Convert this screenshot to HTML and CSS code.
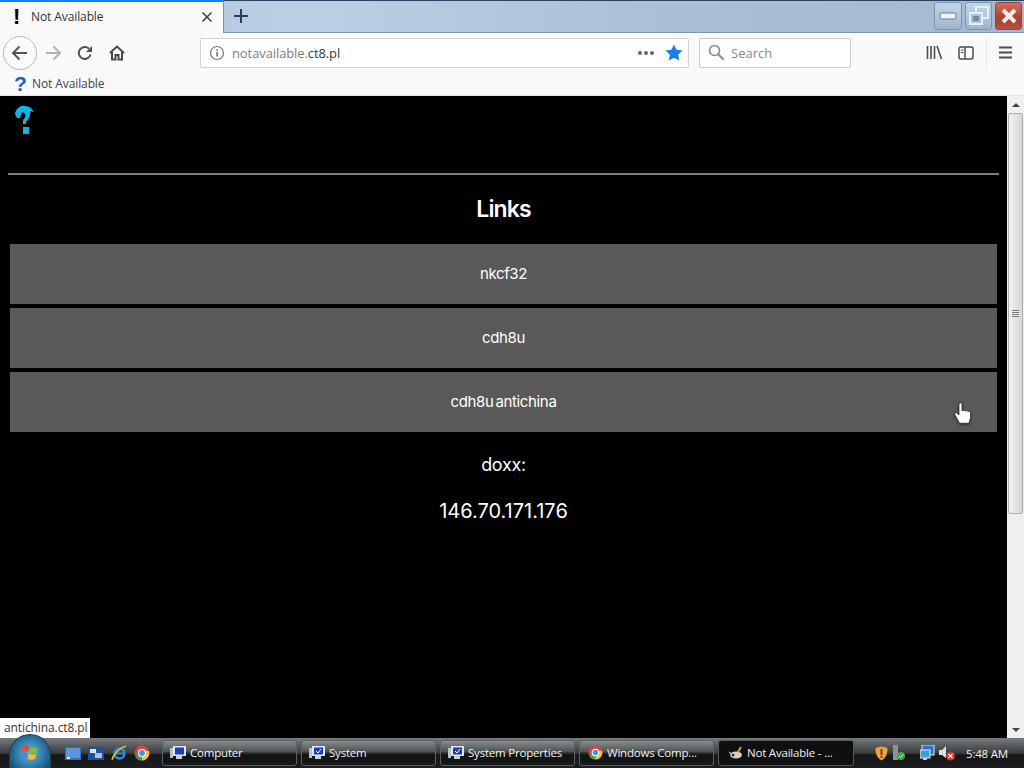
FILE: index.html
```html
<!DOCTYPE html>
<html lang="en">
<head>
<meta charset="utf-8">
<title>Not Available</title>
<link rel="stylesheet" href="styles.css">
</head>
<body>
<div class="screen">
  <header class="tabstrip">
    <div class="tab">
      <span class="tab-bang">!</span>
      <span class="tab-title">Not Available</span>
      <svg class="tab-close" width="12" height="12" viewBox="0 0 12 12"><path d="M1.500 1.500l9 9M10.500 1.500l-9 9" stroke="#444" stroke-width="1.600" fill="none"/></svg>
    </div>
    <svg class="newtab" width="16" height="16" viewBox="0 0 16 16"><path d="M8 1v14M1 8h14" stroke="#25405e" stroke-width="2" fill="none"/></svg>
    <div class="winbtns">
      <div class="winbtn winmin"><svg width="18" height="8" viewBox="0 0 18 8"><rect x="1" y="1" width="16" height="6" rx="1" fill="#eef3f8" stroke="#5f7f9f"/></svg></div>
      <div class="winbtn"><svg width="22" height="20" viewBox="0 0 22 20"><rect x="8" y="1" width="12" height="11" fill="none" stroke="#e8eef5" stroke-width="2"/><rect x="2" y="7" width="12" height="11" fill="#a9c0d6" stroke="#e8eef5" stroke-width="2"/><rect x="5" y="10" width="6" height="5" fill="#6f8ba6"/></svg></div>
      <div class="winbtn winclose"><svg width="18" height="16" viewBox="0 0 18 16"><path d="M3 2l12 12M15 2L3 14" stroke="#f4ece8" stroke-width="4" fill="none"/></svg></div>
    </div>
  </header>

  <nav class="toolbar">
    <div class="backbtn"><svg width="18" height="16" viewBox="0 0 18 16"><path d="M16 8H2M8.500 1.500L2 8l6.500 6.500" stroke="#555" stroke-width="2" fill="none"/></svg></div>
    <svg class="tool fwd" width="18" height="16" viewBox="0 0 18 16"><path d="M2 8h14M9.500 1.500L16 8l-6.500 6.500" stroke="#b0b0b0" stroke-width="2" fill="none"/></svg>
    <svg class="tool reload" width="16" height="16" viewBox="0 0 16 16"><path d="M13.600 9.500A6 6 0 1 1 12 3.600" stroke="#505050" stroke-width="2" fill="none"/><path d="M15 1v6H9z" fill="#505050"/></svg>
    <svg class="tool home" width="16" height="16" viewBox="0 0 16 16"><path d="M1 8l7-6.500L15 8M3 7v7.500h3.500V10h3v4.500H13V7" stroke="#484848" stroke-width="2" fill="none"/></svg>
    <div class="urlbar">
      <svg width="16" height="16" viewBox="0 0 16 16"><circle cx="8" cy="8" r="6.500" fill="none" stroke="#777" stroke-width="1.200"/><rect x="7.300" y="7" width="1.500" height="4.500" fill="#666"/><rect x="7.300" y="4.300" width="1.500" height="1.600" fill="#666"/></svg>
      <span class="url"><span class="url-dim">notavailable.</span>ct8.pl</span>
      <span class="dots"><i></i><i></i><i></i></span>
      <svg width="18" height="17" viewBox="0 0 18 17"><path d="M9 .5l2.600 5.300 5.900.8-4.300 4.100 1 5.800L9 13.800 3.800 16.500l1-5.800L.5 6.600l5.900-.8z" fill="#1a7fe8"/></svg>
    </div>
    <div class="searchbar">
      <svg width="17" height="17" viewBox="0 0 17 17"><circle cx="6.500" cy="6.500" r="5" fill="none" stroke="#8a8a8a" stroke-width="1.600"/><path d="M10.300 10.300l5.500 5.500" stroke="#8a8a8a" stroke-width="2"/></svg>
      <span>Search</span>
    </div>
    <svg class="tool library" width="17" height="15" viewBox="0 0 17 15"><path d="M1.500 1v13M5 1v13M8.500 1v13M11 1l4.500 13" stroke="#4d4d4d" stroke-width="1.600" fill="none"/></svg>
    <svg class="tool sidebar" width="16" height="14" viewBox="0 0 16 14"><rect x="1" y="1" width="14" height="12" rx="2" fill="none" stroke="#4d4d4d" stroke-width="1.500"/><path d="M7 1v12" stroke="#4d4d4d" stroke-width="1.500"/><path d="M3 4h2.500M3 6.500h2.500" stroke="#4d4d4d"/></svg>
    <div class="sep"></div>
    <svg class="tool menu" width="13" height="13" viewBox="0 0 13 13"><path d="M0 1.500h13M0 6.500h13M0 11.500h13" stroke="#4d4d4d" stroke-width="1.800"/></svg>
  </nav>

  <div class="bookmarks">
    <span class="bm-icon">?</span>
    <span>Not Available</span>
  </div>

  <div class="viewport">
    <main class="page">
      <svg class="logo" width="22" height="32" viewBox="0 0 22 32"><path d="M1 10C2 4 7 1 11 2c4 0 7 2 9 6l-4-1c1 4-1 8-4 11v2H9v-4c2-2 3-4 2-6-1-2-3-2-4 0l-1 4-3 0z" fill="#12b4e6"/><rect x="9" y="23" width="6" height="7" fill="#12b4e6"/></svg>
      <hr class="rule">
      <h2 class="heading">Links</h2>
      <div class="links">
        <a class="link">nkcf32</a>
        <a class="link">cdh8u</a>
        <a class="link">cdh8u antichina</a>
      </div>
      <p class="doxx">doxx:</p>
      <p class="ip">146.70.171.176</p>
    </main>
    <aside class="scrollbar">
      <div class="sb-btn"><span class="arrow-up"></span></div>
      <div class="sb-track">
        <div class="sb-thumb"><span class="grip"></span></div>
      </div>
      <div class="sb-btn"><span class="arrow-down"></span></div>
    </aside>
    <div class="status">antichina.ct8.pl</div>
    <svg class="cursor" width="18" height="23" viewBox="0 0 18 23"><path d="M5 2c0-1.500 3-1.500 3 0v7c.5-1 2.500-1 3 .2.5-1 2.500-.8 3 .5.5-.8 2.500-.5 2.500 1v5l-1.500 5.500H5.500L1 13c-1-1.500.5-3 2-2l2 2z" fill="#fff" stroke="#222" stroke-width=".7"/></svg>
  </div>

  <footer class="taskbar">
    <div class="orb">
      <svg width="22" height="19" viewBox="0 0 24 24"><path d="M2 5c3-1.500 6-1.500 9 0l-1.500 6.500c-3-1.500-6-1.500-9 0z" fill="#e0502c"/><path d="M12.500 5.500c3 1.500 6 1.500 9.500 0L20.500 12c-3 1.500-6 1.500-9.500 0z" fill="#7fba3a"/><path d="M.5 13c3-1.500 6-1.500 8.500 0L7.500 19.500c-3-1.500-5.500-1.500-8.500 0z" fill="#3d8ee0"/><path d="M10.500 13.500c3 1.500 6 1.500 9.500 0l-1.500 6.500c-3 1.500-6 1.500-9.500 0z" fill="#f1bc30"/></svg>
    </div>
    <div class="quick">
      <svg width="16" height="13" viewBox="0 0 16 13"><rect width="16" height="13" fill="#2f6fc4"/><rect x="1" y="1" width="14" height="10" fill="#5d95d8"/><rect x="2" y="10" width="3" height="2" fill="#eee"/></svg>
      <svg width="16" height="13" viewBox="0 0 16 13"><rect width="16" height="13" fill="#1f4f99"/><rect x="2" y="2" width="6" height="4" fill="#dfe9f5"/><rect x="7" y="6" width="7" height="5" fill="#a9c3e4"/></svg>
      <svg width="16" height="16" viewBox="0 0 16 16"><circle cx="8.500" cy="8.500" r="5" fill="none" stroke="#2d8ad6" stroke-width="2.500"/><path d="M4 8.500h9" stroke="#2d8ad6" stroke-width="2"/><path d="M1 15c1-5 7-12 14-14" stroke="#e8b830" stroke-width="1.500" fill="none"/></svg>
      <svg class="chrome" width="16" height="16" viewBox="0 0 16 16"><circle cx="8" cy="8" r="7.500" fill="#d8453a"/><path d="M8 8L1.500 12A7.500 7.500 0 0 0 8 15.500z" fill="#3ba74f"/><path d="M8 8v7.500A7.500 7.500 0 0 0 15 6H8z" fill="#f1c232"/><circle cx="8" cy="8" r="3.500" fill="#4a90e2" stroke="#fff" stroke-width="1.200"/></svg>
    </div>
    <div class="task task-computer">
      <svg width="17" height="16" viewBox="0 0 17 16"><rect x="3" y="1" width="13" height="10" fill="#dfe6f0"/><rect x="5" y="2.500" width="9" height="7" fill="#1d3fb5"/><rect x="0" y="3" width="3" height="10" fill="#b9c2cc"/><rect x="6" y="11" width="6" height="3" fill="#c8d0d8"/></svg>
      <span>Computer</span>
    </div>
    <div class="task task-system">
      <svg width="17" height="16" viewBox="0 0 17 16"><rect x="3" y="1" width="13" height="10" fill="#dfe6f0"/><rect x="5" y="2.500" width="9" height="7" fill="#1d3fb5"/><path d="M7 6l2 2 3-4" stroke="#fff" fill="none"/><rect x="0" y="3" width="3" height="10" fill="#b9c2cc"/><rect x="6" y="11" width="6" height="3" fill="#c8d0d8"/></svg>
      <span>System</span>
    </div>
    <div class="task task-props">
      <svg width="17" height="16" viewBox="0 0 17 16"><rect x="3" y="1" width="13" height="10" fill="#dfe6f0"/><rect x="5" y="2.500" width="9" height="7" fill="#1d3fb5"/><path d="M7 6l2 2 3-4" stroke="#fff" fill="none"/><rect x="0" y="3" width="3" height="10" fill="#b9c2cc"/><rect x="6" y="11" width="6" height="3" fill="#c8d0d8"/></svg>
      <span>System Properties</span>
    </div>
    <div class="task task-chrome">
      <svg width="15" height="15" viewBox="0 0 16 16"><circle cx="8" cy="8" r="7.500" fill="#d8453a"/><path d="M8 8L1.500 12A7.500 7.500 0 0 0 8 15.500z" fill="#3ba74f"/><path d="M8 8v7.500A7.500 7.500 0 0 0 15 6H8z" fill="#f1c232"/><circle cx="8" cy="8" r="3.500" fill="#4a90e2" stroke="#fff" stroke-width="1.200"/></svg>
      <span>Windows Comp...</span>
    </div>
    <div class="task task-active">
      <svg width="16" height="14" viewBox="0 0 16 14"><ellipse cx="8" cy="9" rx="6" ry="3.500" fill="#d9d2b8"/><circle cx="5" cy="9" r="1.500" fill="#333"/><path d="M10 6l3-5" stroke="#c9a23a" stroke-width="2"/><path d="M1 6l3 2" stroke="#ddd"/></svg>
      <span>Not Available - ...</span>
    </div>
    <div class="tray">
      <svg class="t-shield" width="13" height="15" viewBox="0 0 13 15"><path d="M6.500.5L12.500 2c0 6-1.500 10-6 12.500C2 12 .5 8 .5 2z" fill="#e7a53a"/><rect x="5.500" y="3" width="2" height="6" fill="#8a3a1a"/><rect x="5.500" y="10" width="2" height="2" fill="#8a3a1a"/></svg>
      <svg class="t-usb" width="14" height="16" viewBox="0 0 14 16"><rect x="2" y="0" width="5" height="15" fill="#8d9296"/><circle cx="10" cy="11" r="4" fill="#3aa64a"/><path d="M8 11l1.500 1.500L12 9.500" stroke="#fff" fill="none"/></svg>
      <svg class="t-net" width="15" height="16" viewBox="0 0 15 16"><rect x="2" y="0" width="12" height="10" fill="#2b74c9" stroke="#dce7f2"/><rect x="0" y="5" width="10" height="8" fill="#3ba0d8" stroke="#dce7f2"/><rect x="3" y="13" width="4" height="2" fill="#ccc"/></svg>
      <svg class="t-sound" width="18" height="16" viewBox="0 0 18 16"><path d="M1 5h3l4-4v12l-4-3H1z" fill="#d9dde2"/><circle cx="12.500" cy="11" r="4.500" fill="#d5342c"/><path d="M10.500 9l4 4M14.500 9l-4 4" stroke="#fff" stroke-width="1.200"/></svg>
      <span class="clock">5:48 AM</span>
    </div>
  </footer>
</div>
</body>
</html>
```

FILE: styles.css
```css
* { box-sizing: border-box; }
html, body { margin: 0; padding: 0; height: 100%; overflow: hidden; background: #000; }
.screen { width: 1024px; height: 768px; display: flex; flex-direction: column; font-family: "Open Sans", "Noto Sans", sans-serif; }

.tabstrip { height: 33px; display: flex; align-items: stretch; background: linear-gradient(90deg, #a9c2dc 0%, #bcd0e4 30%, #a9c0d8 65%, #a4bad2 100%); border-top: 1px solid #27435f; border-bottom: 1px solid #7f93a8; }
.tab { width: 224px; margin-top: -1px; margin-bottom: -1px; background: #f9f9fa; border-top: 2px solid #0a84ff; border-right: 1px solid #7f93a8; display: flex; align-items: center; padding: 0 0 2px 13px; }
.tab-bang { width: 18px; font: 700 22px/22px "Liberation Sans", sans-serif; color: #000; }
.tab-title { flex: 1; font-size: 12px; letter-spacing: -0.1px; color: #333; }
.tab-close { margin-right: 10px; }
.newtab { align-self: center; margin: -2px 0 0 9px; }
.winbtns { margin-left: auto; margin-right: 2px; display: flex; gap: 3px; height: 28px; margin-top: 1px; }
.winbtn { width: 27px; height: 28px; display: flex; align-items: center; justify-content: center; border: 1px solid #7a95b2; border-radius: 3px; background: linear-gradient(#c4d6e8, #9db6ce); }
.winmin { width: 28px; }
.winclose { background: linear-gradient(#d36f5f, #a8402f 60%, #b5523f); border-color: #8d4a40; }

.toolbar { height: 38px; padding-top: 1px; background: #f9f9fa; display: flex; align-items: center; }
.backbtn { width: 34px; height: 34px; margin-left: 3px; border: 1px solid #b8b8b8; border-radius: 50%; display: flex; align-items: center; justify-content: center; background: #fbfbfb; }
.tool { flex: none; }
.fwd { margin-left: 7px; }
.reload { margin-left: 15px; }
.home { margin-left: 16px; }
.urlbar { width: 489px; height: 30px; margin-left: 75px; background: #fff; border: 1px solid #d2d2d2; border-radius: 2px; display: flex; align-items: center; padding: 0 5px 0 8px; }
.url { flex: 1; margin-left: 7px; font-size: 13px; letter-spacing: -0.1px; color: #3a3a3a; }
.url-dim { color: #7d7d7d; }
.dots { display: flex; gap: 2px; margin-right: 11px; }
.dots i { width: 4px; height: 4px; border-radius: 50%; background: #666; }
.searchbar { width: 152px; height: 30px; margin-left: 10px; background: #fff; border: 1px solid #ccc; border-radius: 2px; display: flex; align-items: center; gap: 6px; padding-left: 8px; font-size: 13px; color: #8a8a8a; }
.library { margin-left: 75px; }
.sidebar { margin-left: 15px; }
.sep { width: 1px; height: 32px; margin-left: 12px; background: #e6e6e6; }
.menu { margin-left: 12px; }

.bookmarks { height: 25px; background: #f9f9fa; border-bottom: 1px solid #e6e6e6; display: flex; align-items: center; padding-left: 14px; font-size: 12px; letter-spacing: -0.1px; color: #444; }
.bm-icon { width: 18px; font: 700 21px/21px "Liberation Sans", sans-serif; color: #1f63b8; }

.viewport { flex: 1; display: flex; position: relative; min-height: 0; background: #000; }
.page { flex: 1; padding: 8px 8px 0; font-family: Inter, "Liberation Sans", sans-serif; color: #fff; text-align: center; }
.logo { display: block; margin-left: 6px; }
.rule { margin: 37px 0 0; border: 0; height: 2px; background: #808080; }
.heading { margin: 21px 0 0; height: 27px; font-size: 23px; line-height: 27px; font-weight: 600; letter-spacing: -0.9px; }
.links { margin: 21px 2px 0; display: flex; flex-direction: column; gap: 4px; }
.link { height: 60px; padding-bottom: 2px; display: flex; align-items: center; justify-content: center; background: #595959; font-size: 15px; color: #fff; letter-spacing: -0.35px; word-spacing: -2px; }
.doxx { margin: 21px 0 0; font-size: 18px; line-height: 24px; letter-spacing: -0.3px; }
.ip { margin: 22px 0 0; font-size: 20px; line-height: 24px; }

.scrollbar { width: 17px; background: #f0f0f0; display: flex; flex-direction: column; }
.sb-btn { height: 17px; display: flex; align-items: center; justify-content: center; }
.arrow-up { border: 4px solid transparent; border-top: 0; border-bottom: 4px solid #444; }
.arrow-down { border: 4px solid transparent; border-bottom: 0; border-top: 4px solid #444; }
.sb-track { flex: 1; }
.sb-thumb { height: 401px; margin: 0 1px; border: 1px solid #aeaeae; border-radius: 2px; background: linear-gradient(90deg, #f2f2f2, #d6d6d6); display: flex; align-items: center; justify-content: center; }
.grip { width: 7px; height: 7px; background: repeating-linear-gradient(#777 0 1px, #eee 1px 2px); }
.status { position: absolute; left: 0; bottom: 0; height: 20px; width: 90px; padding-left: 4px; background: #fff; color: #333; font-size: 12px; letter-spacing: -0.1px; line-height: 20px; }
.cursor { position: absolute; left: 954px; top: 306px; filter: drop-shadow(0 1px 1px rgba(0,0,0,.6)); }

.taskbar { height: 30px; padding: 2px 0; display: flex; align-items: center; position: relative; background: linear-gradient(#75797b 0, #6d7173 3px, #55595b 8px, #3a3d3e 15px, #161718 17px, #1c1d1e 100%); color: #f2f2f2; font-size: 11.5px; letter-spacing: -0.2px; }
.orb { position: absolute; left: 9px; top: -4px; width: 42px; height: 34px; padding-top: 8px; border-radius: 21px 21px 0 0; background: radial-gradient(circle at 50% 55%, #6fb4dc 0, #2a76a8 55%, #123a58 100%); border: 1px solid #243c50; border-bottom: 0; display: flex; align-items: flex-start; justify-content: center; }
.quick { margin-left: 65px; width: 96px; display: flex; align-items: center; gap: 7px; }
.task { height: 26px; display: flex; align-items: center; gap: 3px; padding: 0 0 1px 7px; border: 1px solid #5d6163; border-radius: 3px; background: linear-gradient(rgba(255,255,255,.2) 0, rgba(255,255,255,.08) 45%, rgba(0,0,0,.25) 50%, rgba(0,0,0,.1) 100%); white-space: nowrap; overflow: hidden; }
.task-computer { width: 135px; margin-left: 1px; }
.task-system { width: 135px; margin-left: 4px; }
.task-props { width: 135px; margin-left: 4px; }
.task-chrome { width: 135px; margin-left: 4px; gap: 4px; padding-left: 8px; }
.task-active { width: 136px; margin-left: 4px; gap: 3px; padding-left: 9px; background: #0e0f10; border-color: #55595b; }
.tray { margin-left: auto; display: flex; align-items: center; padding-right: 16px; }
.t-usb { margin-left: 3px; }
.t-net { margin-left: 15px; }
.t-sound { margin-left: 3px; }
.clock { margin-left: 10px; }
```
